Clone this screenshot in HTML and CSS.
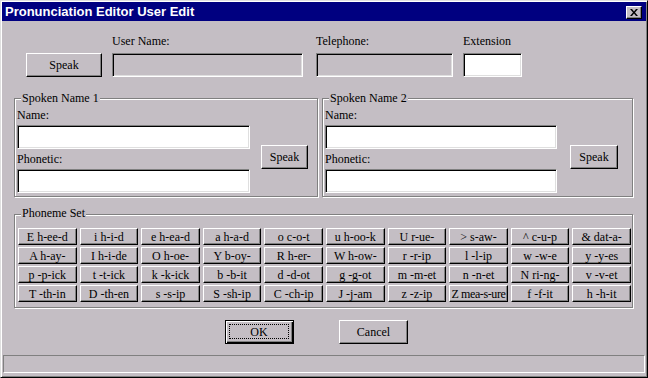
FILE: index.html
```html
<!DOCTYPE html>
<html>
<head>
<meta charset="utf-8">
<link rel="stylesheet" href="styles.css">
</head>
<body>
<div class="window">
  <div class="titlebar">
    <span class="title">Pronunciation Editor User Edit</span>
    <button class="close" aria-label="Close">
      <svg width="8" height="7" viewBox="0 0 8 7"><path d="M0 0h2l2 2.5L6 0h2L5 3.5 8 7H6L4 4.5 2 7H0l3-3.5z" fill="#000"/></svg>
    </button>
  </div>
  <div class="content">
    <div class="top-row">
      <button class="btn main-speak">Speak</button>
      <div class="field user"><span class="lbl">User Name:</span><div class="input gray"></div></div>
      <div class="field tel"><span class="lbl">Telephone:</span><div class="input gray"></div></div>
      <div class="field ext"><span class="lbl">Extension</span><div class="input"></div></div>
    </div>
    <div class="groups">
      <div class="group g1">
        <span class="legend">Spoken Name 1</span>
        <div class="g-inner">
          <div class="fields">
            <span class="lbl">Name:</span>
            <div class="input"></div>
            <span class="lbl l2">Phonetic:</span>
            <div class="input"></div>
          </div>
          <button class="btn g-speak">Speak</button>
        </div>
      </div>
      <div class="group g2">
        <span class="legend">Spoken Name 2</span>
        <div class="g-inner">
          <div class="fields">
            <span class="lbl">Name:</span>
            <div class="input"></div>
            <span class="lbl l2">Phonetic:</span>
            <div class="input"></div>
          </div>
          <button class="btn g-speak">Speak</button>
        </div>
      </div>
    </div>
    <div class="group phonemes">
      <span class="legend">Phoneme Set</span>
      <div class="pgrid">
        <button class="btn pb">E h-ee-d</button>
        <button class="btn pb">i h-i-d</button>
        <button class="btn pb">e h-ea-d</button>
        <button class="btn pb">a h-a-d</button>
        <button class="btn pb">o c-o-t</button>
        <button class="btn pb">u h-oo-k</button>
        <button class="btn pb">U r-ue-</button>
        <button class="btn pb">&gt; s-aw-</button>
        <button class="btn pb">^ c-u-p</button>
        <button class="btn pb">&amp; dat-a-</button>
        <button class="btn pb">A h-ay-</button>
        <button class="btn pb">I h-i-de</button>
        <button class="btn pb">O h-oe-</button>
        <button class="btn pb">Y b-oy-</button>
        <button class="btn pb">R h-er-</button>
        <button class="btn pb">W h-ow-</button>
        <button class="btn pb">r -r-ip</button>
        <button class="btn pb">l -l-ip</button>
        <button class="btn pb">w -w-e</button>
        <button class="btn pb">y -y-es</button>
        <button class="btn pb">p -p-ick</button>
        <button class="btn pb">t -t-ick</button>
        <button class="btn pb">k -k-ick</button>
        <button class="btn pb">b -b-it</button>
        <button class="btn pb">d -d-ot</button>
        <button class="btn pb">g -g-ot</button>
        <button class="btn pb">m -m-et</button>
        <button class="btn pb">n -n-et</button>
        <button class="btn pb">N ri-ng-</button>
        <button class="btn pb">v -v-et</button>
        <button class="btn pb">T -th-in</button>
        <button class="btn pb">D -th-en</button>
        <button class="btn pb">s -s-ip</button>
        <button class="btn pb">S -sh-ip</button>
        <button class="btn pb">C -ch-ip</button>
        <button class="btn pb">J -j-am</button>
        <button class="btn pb">z -z-ip</button>
        <button class="btn pb tight">Z mea-s-ure</button>
        <button class="btn pb">f -f-it</button>
        <button class="btn pb">h -h-it</button>
      </div>
    </div>
    <div class="actions">
      <button class="btn ok"><span class="focus">OK</span></button>
      <button class="btn act">Cancel</button>
    </div>
    <div class="status"></div>
  </div>
</div>
</body>
</html>
```
FILE: styles.css
```css
* { box-sizing: border-box; }
html, body { margin: 0; padding: 0; }
body {
  background: #c4bec4;
  font-family: "Liberation Serif", "Times New Roman", serif;
  font-size: 12px;
  color: #000;
}
.window {
  width: 648px;
  height: 378px;
  border: 1px solid;
  border-color: #dfdfdf #000 #000 #dfdfdf;
  box-shadow: inset 1px 1px #fff, inset -1px -1px #808080;
  padding: 1px;
  display: flex;
  flex-direction: column;
  background: #c4bec4;
}
.titlebar {
  height: 19px;
  background: #000080;
  color: #fff;
  display: flex;
  align-items: center;
  justify-content: space-between;
  padding: 0 4px 0 3px;
  font: bold 13px/19px "Liberation Sans", Arial, sans-serif;
}
.close {
  width: 16px;
  height: 13px;
  padding: 0;
  margin-top: 1px;
  background: #c4bec4;
  border: 1px solid;
  border-color: #fff #000 #000 #fff;
  box-shadow: inset -1px -1px #808080;
  display: flex;
  align-items: center;
  justify-content: center;
}
.close svg { display: block; }
.content {
  flex: 1;
  display: flex;
  flex-direction: column;
}
.btn {
  background: #c4bec4;
  border: 1px solid;
  border-color: #fff #000 #000 #fff;
  box-shadow: inset -1px -1px #808080;
  font: 12px/14px "Liberation Serif", "Times New Roman", serif;
  color: #000;
  padding: 0;
  margin: 0;
  white-space: nowrap;
}
.lbl { display: block; line-height: 14px; white-space: nowrap; }
.input {
  height: 24px;
  background: #fff;
  border: 1px solid;
  border-color: #808080 #fff #fff #808080;
  box-shadow: inset 1px 1px #000, inset -1px -1px #dfdfdf;
}
.input.gray { background: #c4bec4; }

.top-row {
  display: flex;
  align-items: flex-end;
  margin-top: 13px;
  padding-left: 24px;
  height: 43px;
}
.main-speak { width: 76px; height: 24px; }
.field { display: flex; flex-direction: column; margin-left: 10px; }
.field .lbl { margin-bottom: 5px; }
.user .input { width: 191px; }
.tel { margin-left: 13px; }
.tel .input { width: 137px; }
.ext .input { width: 59px; }

.groups {
  display: flex;
  gap: 4px;
  margin-top: 21px;
  padding-left: 12px;
}
.group {
  position: relative;
  border: 1px solid #808080;
  box-shadow: inset 1px 1px #fff, 1px 1px #fff;
}
.legend {
  position: absolute;
  top: -8px;
  left: 6px;
  padding: 0 1px;
  line-height: 14px;
  background: #c4bec4;
  white-space: nowrap;
}
.g1 { width: 304px; }
.g2 { width: 311px; }
.g-inner { display: flex; padding: 9px 3px 3px 2px; }
.fields { display: flex; flex-direction: column; width: 233px; }
.g2 .fields { width: 232px; }
.fields .lbl { margin-bottom: 3px; }
.fields .l2 { margin-top: 3px; }
.g-speak { width: 47px; height: 24px; margin-top: 37px; margin-left: 11px; }
.g2 .g-speak { width: 48px; margin-left: 13px; }

.phonemes {
  margin: 17px 0 0 12px;
  width: 619px;
  padding: 13px 1px 5px 3px;
}
.phonemes .legend { top: -9px; }
.pgrid {
  display: grid;
  grid-template-columns: repeat(10, 1fr);
  grid-auto-rows: 17px;
  column-gap: 3px;
  row-gap: 2px;
}
.pb { line-height: 14px; overflow: hidden; }
.pb.tight { letter-spacing: -0.4px; }

.actions {
  display: flex;
  gap: 45px;
  margin-top: 12px;
  padding-left: 223px;
}
.actions .btn { width: 69px; height: 24px; }
.ok {
  border-color: #000;
  box-shadow: inset 1px 1px #fff, inset -1px -1px #000, inset -2px -2px #808080;
  display: flex;
  padding: 3px 4px 4px 3px;
}
.focus {
  flex: 1;
  border: 1px dotted #000;
  display: flex;
  align-items: center;
  justify-content: center;
}
.status {
  margin: 11px 0 0 1px;
  width: 642px;
  height: 18px;
  border: 1px solid;
  border-color: #808080 #fff #fff #808080;
}
```
